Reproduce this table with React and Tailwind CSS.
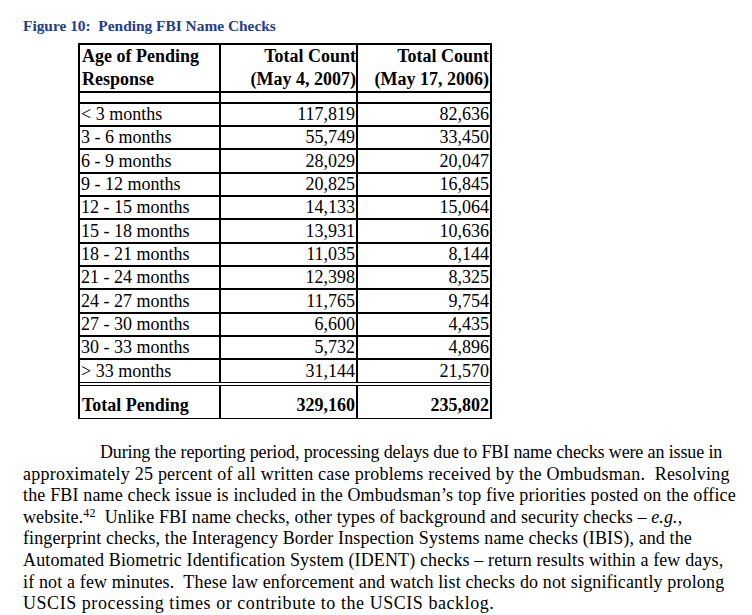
const rows = [
  ["< 3 months", "117,819", "82,636", 23],
  ["3 - 6 months", "55,749", "33,450", 23],
  ["6 - 9 months", "28,029", "20,047", 24],
  ["9 - 12 months", "20,825", "16,845", 23],
  ["12 - 15 months", "14,133", "15,064", 23],
  ["15 - 18 months", "13,931", "10,636", 24],
  ["18 - 21 months", "11,035", "8,144", 23],
  ["21 - 24 months", "12,398", "8,325", 23],
  ["24 - 27 months", "11,765", "9,754", 24],
  ["27 - 30 months", "6,600", "4,435", 23],
  ["30 - 33 months", "5,732", "4,896", 23],
  ["> 33 months", "31,144", "21,570", 24],
];

function Row({ cells, height, last }) {
  return (
    <div
      className={`grid grid-cols-[141px_137px_1fr] border-black ${last ? "border-b-4 border-double" : "border-b-2"}`}
      style={{ height }}
    >
      <div className="border-r-2 border-black pl-[1px] flex items-center">{cells[0]}</div>
      <div className="border-r-2 border-black pr-[1px] flex items-center justify-end">{cells[1]}</div>
      <div className="pr-[1px] flex items-center justify-end">{cells[2]}</div>
    </div>
  );
}

export default function App() {
  return (
    <div className="w-[752px] h-[615px] bg-white text-black overflow-hidden font-['Liberation_Serif','Times_New_Roman',serif]">
      <div className="pl-[23px] pt-[17px] text-[15.4px] leading-[18px] font-bold text-[#233d8c]">
        Figure 10:&nbsp; Pending FBI Name Checks
      </div>

      {/* Table */}
      <div className="ml-[78px] mt-[8px] w-[414px] border-2 border-b border-black text-[18px] leading-[21px]">
        <div className="grid grid-cols-[141px_137px_1fr] border-b-2 border-black font-bold leading-[23px] h-[48px]">
          <div className="border-r-2 border-black pl-[2px]">
            Age of Pending
            <br />
            Response
          </div>
          <div className="border-r-2 border-black text-right">
            Total Count
            <br />
            (May 4, 2007)
          </div>
          <div className="text-right pr-[1px]">
            Total Count
            <br />
            (May 17, 2006)
          </div>
        </div>
        <div className="grid grid-cols-[141px_137px_1fr] border-b-2 border-black h-[11px]">
          <div className="border-r-2 border-black" />
          <div className="border-r-2 border-black" />
          <div />
        </div>
        {rows.map((r, i) => (
          <Row key={r[0]} cells={r} height={r[3] + (i === rows.length - 1 ? 2 : 0)} last={i === rows.length - 1} />
        ))}
        <div className="grid grid-cols-[141px_137px_1fr] font-bold h-[32px] leading-[20px]">
          <div className="border-r-2 border-black pl-[2px] pt-[9px]">Total Pending</div>
          <div className="border-r-2 border-black text-right pr-[1px] pt-[9px]">329,160</div>
          <div className="text-right pr-[1px] pt-[9px]">235,802</div>
        </div>
      </div>

      {/* Paragraph */}
      <p className="ml-[23px] mt-[23px] text-[18px] leading-[21.6px] whitespace-nowrap">
        <span className="pl-[77px] tracking-[-0.13px]">
          During the reporting period, processing delays due to FBI name checks were an issue in
        </span>
        <br />
        <span className="tracking-[0.23px]">
          approximately 25 percent of all written case problems received by the Ombudsman.&nbsp; Resolving
        </span>
        <br />
        <span className="tracking-[0.16px]">
          the FBI name check issue is included in the Ombudsman’s top five priorities posted on the office
        </span>
        <br />
        <span className="tracking-[0.1px]">
          website.<sup className="text-[12px] relative -top-[6px]">42</sup>&nbsp; Unlike FBI name checks, other types of background and security checks – <i>e.g.</i>,
        </span>
        <br />
        <span className="tracking-[0.12px]">
          fingerprint checks, the Interagency Border Inspection Systems name checks (IBIS), and the
        </span>
        <br />
        <span className="tracking-[0.13px]">
          Automated Biometric Identification System (IDENT) checks – return results within a few days,
        </span>
        <br />
        <span className="tracking-[0.14px]">
          if not a few minutes.&nbsp; These law enforcement and watch list checks do not significantly prolong
        </span>
        <br />
        <span className="tracking-[0.55px]">
          USCIS processing times or contribute to the USCIS backlog.
        </span>
      </p>
    </div>
  );
}
